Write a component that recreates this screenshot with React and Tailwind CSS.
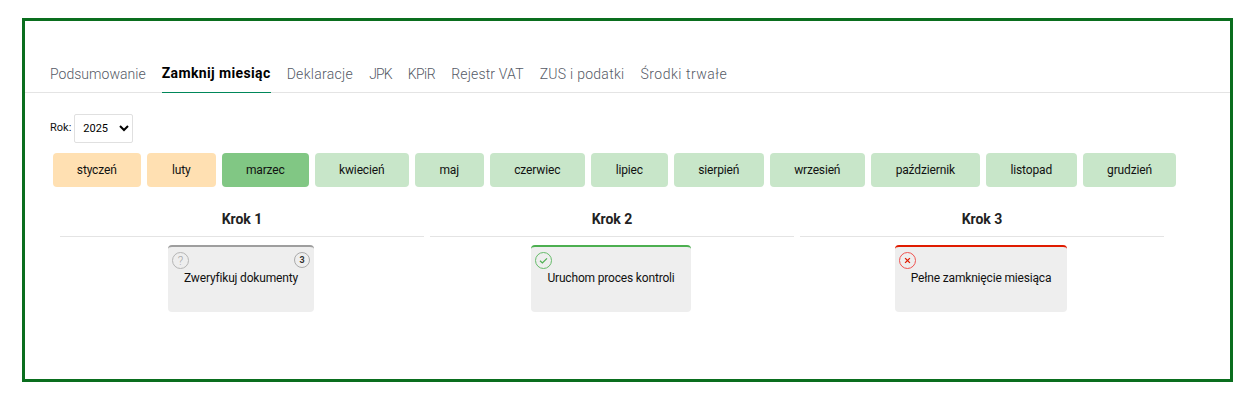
import React from 'react';

const tabs = [
  { label: "Podsumowanie", cls: "tracking-[0.03px]" },
  { label: "Zamknij miesiąc", active: true, cls: "tracking-[0.37px]" },
  { label: "Deklaracje", cls: "tracking-[0.3px]" },
  { label: "JPK", cls: "tracking-[-0.9px]" },
  { label: "KPiR", cls: "tracking-[-0.5px]" },
  { label: "Rejestr VAT", cls: "tracking-[0.17px]" },
  { label: "ZUS i podatki", cls: "tracking-[0.27px]" },
  { label: "Środki trwałe", cls: "tracking-[0.5px]" },
];

const months = [
  { name: "styczeń", cls: "w-[87.5px] bg-[#ffe0b2]" },
  { name: "luty", cls: "w-[68.5px] bg-[#ffe0b2]" },
  { name: "marzec", cls: "w-[86.5px] bg-[#81c784]" },
  { name: "kwiecień", cls: "w-[93.5px] bg-[#c8e6c9]" },
  { name: "maj", cls: "w-[68.5px] bg-[#c8e6c9]" },
  { name: "czerwiec", cls: "w-[94.5px] bg-[#c8e6c9]" },
  { name: "lipiec", cls: "w-[76.5px] bg-[#c8e6c9]" },
  { name: "sierpień", cls: "w-[89.5px] bg-[#c8e6c9]" },
  { name: "wrzesień", cls: "w-[94.5px] bg-[#c8e6c9]" },
  { name: "październik", cls: "w-[108.5px] bg-[#c8e6c9]" },
  { name: "listopad", cls: "w-[90.5px] bg-[#c8e6c9]" },
  { name: "grudzień", cls: "w-[93px] bg-[#c8e6c9]" },
];

const StatusIcon = ({ type }) => {
  if (type === "ok") {
    return (
      <svg width="17" height="17" viewBox="0 0 17 17" fill="none" className="absolute left-[4px] top-[5px]">
        <circle cx="8.5" cy="8.5" r="8" stroke="#66bb6a" strokeWidth="1" />
        <path d="M5 8.7l2.4 2.3 4.6-4.6" stroke="#4caf50" strokeWidth="1.2" />
      </svg>
    );
  }
  if (type === "err") {
    return (
      <svg width="17" height="17" viewBox="0 0 17 17" fill="none" className="absolute left-[4px] top-[5px]">
        <circle cx="8.5" cy="8.5" r="8" stroke="#ef5350" strokeWidth="1" />
        <path d="M6.1 6.1l4.8 4.8M10.9 6.1l-4.8 4.8" stroke="#e01b00" strokeWidth="1.3" />
      </svg>
    );
  }
  return (
    <span className="absolute left-[4px] top-[5px] flex h-[17px] w-[17px] items-center justify-center rounded-full border border-[#b5b5b5] text-xs leading-none font-light text-[#a8a8a8]">
      ?
    </span>
  );
};

const steps = [
  { title: "Krok 1", text: "Zweryfikuj dokumenty", icon: "info", badge: "3", cardCls: "w-[146px] border-[#9e9e9e]" },
  { title: "Krok 2", text: "Uruchom proces kontroli", icon: "ok", cardCls: "w-[160px] border-[#4caf50]" },
  { title: "Krok 3", text: "Pełne zamknięcie miesiąca", icon: "err", cardCls: "w-[172px] border-[#e01b00]" },
];

export default function App() {
  return (
    <div className="min-h-[400px] bg-white pl-[22px] pt-[18px] font-['Roboto',sans-serif]">
      <div className="h-[364px] w-[1211px] border-[3px] border-[#0a6e1e]">
        <div className="flex h-[72px] items-end gap-4 border-b border-[#e4e4e4] pl-[25px]">
          {tabs.map(tab => (
            <div
              key={tab.label}
              className={`${tab.active
                ? "-mb-px border-b border-[#00875a] pb-[9px] text-sm leading-5 font-bold text-black"
                : "pb-[8px] text-sm leading-5 font-light text-[#555a66]"} ${tab.cls}`}
            >
              {tab.label}
            </div>
          ))}
        </div>

        <div className="mt-[21px] flex items-center pl-[25px]">
          <label className="mr-[3px] text-[11px] text-[#111]">Rok:</label>
          <select defaultValue="2025" className="h-[29px] w-[59px] rounded-[2px] border border-[#e0e0e0] bg-white pl-[4px] text-[11px] text-black">
            <option>2025</option>
            <option>2024</option>
          </select>
        </div>

        <div className="mt-[10px] flex gap-[6.5px] pl-[28px]">
          {months.map(m => (
            <button key={m.name} className={`flex h-[34px] items-center justify-center rounded-[4px] text-xs tracking-[-0.15px] text-[#111] ${m.cls}`}>
              {m.name}
            </button>
          ))}
        </div>

        <div className="mt-[20px] ml-[32px] grid w-[1110px] grid-cols-3">
          {steps.map(step => (
            <div key={step.title} className="flex flex-col items-center px-[3px]">
              <div className="h-[30px] w-full border-b border-[#e4e4e4] pt-[2px] text-center text-sm leading-5 font-bold text-[#222]">
                {step.title}
              </div>
              <div className={`relative mt-[8px] mr-[2px] flex h-[67px] justify-center rounded-[4px] border-t-2 bg-[#eeeeee] pt-[23px] text-xs leading-4 tracking-[-0.17px] text-[#111] ${step.cardCls}`}>
                <StatusIcon type={step.icon} />
                {step.badge && (
                  <span className="absolute right-[4px] top-[5px] flex h-[16px] w-[16px] items-center justify-center rounded-full border border-[#aaa] text-[9px] leading-none font-bold text-[#333]">
                    {step.badge}
                  </span>
                )}
                {step.text}
              </div>
            </div>
          ))}
        </div>
      </div>
    </div>
  );
}
